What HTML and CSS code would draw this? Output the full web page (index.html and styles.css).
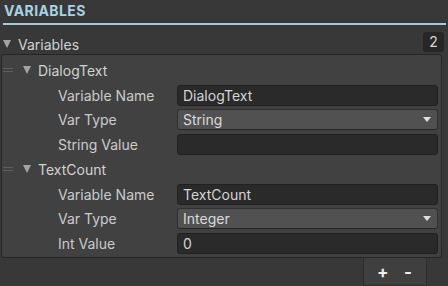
FILE: index.html
```html
<!DOCTYPE html>
<html>
<head>
<meta charset="utf-8">
<link rel="stylesheet" href="styles.css">
</head>
<body>
<div class="inspector">
  <div class="title">VARIABLES</div>
  <div class="rule"></div>
  <div class="list-header">
    <span class="fold"></span>
    <span class="list-name">Variables</span>
    <span class="badge">2</span>
  </div>
  <div class="list">
    <div class="el-header">
      <span class="handle"></span>
      <span class="fold"></span>
      <span class="el-name">DialogText</span>
    </div>
    <div class="row"><span class="label">Variable Name</span><div class="field">DialogText</div></div>
    <div class="row"><span class="label">Var Type</span><div class="dropdown"><span>String</span><span class="caret"></span></div></div>
    <div class="row"><span class="label">String Value</span><div class="field"></div></div>
    <div class="el-header">
      <span class="handle"></span>
      <span class="fold"></span>
      <span class="el-name">TextCount</span>
    </div>
    <div class="row"><span class="label">Variable Name</span><div class="field">TextCount</div></div>
    <div class="row"><span class="label">Var Type</span><div class="dropdown"><span>Integer</span><span class="caret"></span></div></div>
    <div class="row"><span class="label">Int Value</span><div class="field">0</div></div>
  </div>
  <div class="footer">
    <div class="buttons"><span class="btn">+</span><span class="btn minus">-</span></div>
  </div>
</div>
</body>
</html>
```

FILE: styles.css
```css
html, body {
  margin: 0;
  padding: 0;
  background: #383838;
  width: 448px;
  height: 286px;
  overflow: hidden;
}
.inspector {
  font-family: Inter, "Noto Sans", sans-serif;
  font-size: 14px;
  color: #d2d2d2;
  display: flex;
  flex-direction: column;
}
.title {
  height: 23px;
  line-height: 21px;
  padding-left: 4px;
  font-weight: 700;
  font-size: 14px;
  color: #a9d2e2;
  letter-spacing: 0.4px;
}
.rule {
  height: 2px;
  margin: 0 2px 0 3px;
  background: #a3cbdb;
}
.list-header {
  height: 29px;
  box-sizing: border-box;
  padding: 9px 4px 0 3px;
  display: flex;
  align-items: center;
}
.fold {
  width: 0;
  height: 0;
  border-left: 4.5px solid transparent;
  border-right: 4.5px solid transparent;
  border-top: 8px solid #a4a4a4;
  flex: none;
}
.list-name {
  margin-left: 7px;
  flex: 1;
}
.badge {
  align-self: flex-start;
  margin-top: -2px;
  width: 21px;
  height: 20px;
  background: #262626;
  border-radius: 3px;
  text-align: center;
  line-height: 20px;
  color: #d6d6d6;
}
.list {
  margin: 0 6px 0 1px;
  background: #414141;
  border: 1px solid #262626;
  border-radius: 3px;
  padding: 3px 3px 1px 0;
  display: flex;
  flex-direction: column;
}
.el-header {
  height: 24.75px;
  display: flex;
  align-items: center;
}
.handle {
  width: 10px;
  height: 2px;
  margin-left: 1px;
  border-top: 1px solid #5e5e5e;
  border-bottom: 1px solid #5e5e5e;
  flex: none;
}
.el-header .fold {
  margin-left: 10px;
}
.el-name {
  margin-left: 7px;
}
.row {
  height: 24.75px;
  display: flex;
  align-items: center;
}
.label {
  width: 119px;
  padding-left: 56px;
  flex: none;
  color: #cbcbcb;
}
.field {
  flex: 1;
  height: 21px;
  box-sizing: border-box;
  background: #2a2a2a;
  border: 1px solid #212121;
  border-radius: 3px;
  padding-left: 5px;
  line-height: 19px;
  color: #d4d4d4;
}
.dropdown {
  flex: 1;
  height: 21px;
  box-sizing: border-box;
  background: #515151;
  border: 1px solid #303030;
  border-bottom-color: #262626;
  border-radius: 3px;
  padding: 0 6px 0 5px;
  display: flex;
  align-items: center;
  justify-content: space-between;
  color: #dadada;
}
.caret {
  width: 0;
  height: 0;
  border-left: 4px solid transparent;
  border-right: 4px solid transparent;
  border-top: 5px solid #e0e0e0;
}
.footer {
  display: flex;
  justify-content: flex-end;
  padding-right: 21px;
}
.buttons {
  width: 64px;
  height: 28px;
  box-sizing: border-box;
  background: #3f3f3f;
  border: 1px solid #2c2c2c;
  border-top: none;
  display: flex;
  align-items: center;
  justify-content: center;
  gap: 16px;
  font-weight: 700;
  font-size: 17px;
  color: #eeeeee;
}
.btn {
  width: 10px;
  text-align: center;
  line-height: 20px;
}
```
